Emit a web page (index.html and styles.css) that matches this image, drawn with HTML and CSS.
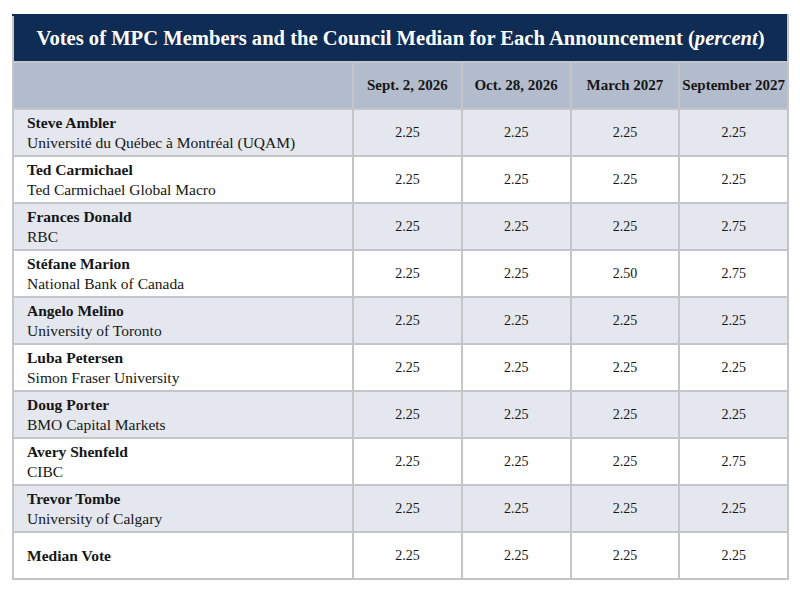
FILE: index.html
```html
<!DOCTYPE html>
<html lang="en">
<head>
<meta charset="utf-8">
<title>Votes of MPC Members</title>
<link rel="stylesheet" href="styles.css">
</head>
<body>
<div class="page">
  <table class="votes">
    <colgroup>
      <col class="c-name">
      <col class="c-val">
      <col class="c-val">
      <col class="c-val">
      <col class="c-val">
    </colgroup>
    <thead>
      <tr class="title-row">
        <th colspan="5" class="title">Votes of MPC Members and the Council Median for Each Announcement (<em>percent</em>)</th>
      </tr>
      <tr class="head-row">
        <th></th>
        <th>Sept. 2, 2026</th>
        <th>Oct. 28, 2026</th>
        <th>March 2027</th>
        <th>September 2027</th>
      </tr>
    </thead>
    <tbody>
      <tr class="alt"><td class="name"><b>Steve Ambler</b><br>Université du Québec à Montréal (UQAM)</td><td>2.25</td><td>2.25</td><td>2.25</td><td>2.25</td></tr>
      <tr><td class="name"><b>Ted Carmichael</b><br>Ted Carmichael Global Macro</td><td>2.25</td><td>2.25</td><td>2.25</td><td>2.25</td></tr>
      <tr class="alt"><td class="name"><b>Frances Donald</b><br>RBC</td><td>2.25</td><td>2.25</td><td>2.25</td><td>2.75</td></tr>
      <tr><td class="name"><b>Stéfane Marion</b><br>National Bank of Canada</td><td>2.25</td><td>2.25</td><td>2.50</td><td>2.75</td></tr>
      <tr class="alt"><td class="name"><b>Angelo Melino</b><br>University of Toronto</td><td>2.25</td><td>2.25</td><td>2.25</td><td>2.25</td></tr>
      <tr><td class="name"><b>Luba Petersen</b><br>Simon Fraser University</td><td>2.25</td><td>2.25</td><td>2.25</td><td>2.25</td></tr>
      <tr class="alt"><td class="name"><b>Doug Porter</b><br>BMO Capital Markets</td><td>2.25</td><td>2.25</td><td>2.25</td><td>2.25</td></tr>
      <tr><td class="name"><b>Avery Shenfeld</b><br>CIBC</td><td>2.25</td><td>2.25</td><td>2.25</td><td>2.75</td></tr>
      <tr class="alt"><td class="name"><b>Trevor Tombe</b><br>University of Calgary</td><td>2.25</td><td>2.25</td><td>2.25</td><td>2.25</td></tr>
      <tr><td class="name"><b>Median Vote</b></td><td>2.25</td><td>2.25</td><td>2.25</td><td>2.25</td></tr>
    </tbody>
  </table>
</div>
</body>
</html>
```
FILE: styles.css
```css
html, body {
  margin: 0;
  padding: 0;
  background: #ffffff;
}

.page {
  padding: 14px 13px 0 12px;
  font-family: "Liberation Serif", "DejaVu Serif", serif;
  color: #161616;
}

.votes {
  width: 775px;
  border-collapse: collapse;
  table-layout: fixed;
  font-size: 15.5px;
}

.c-name { width: 340px; }
.c-val { width: 108.75px; }

.votes th,
.votes td {
  border: 2px solid #c3c5c9;
  padding: 0;
  height: 45px;
  vertical-align: middle;
}

.title-row .title {
  background: #0e2c54;
  color: #ffffff;
  font-size: 20.6px;
  font-weight: bold;
  text-align: center;
  height: 45px;
  border-color: #0e2c54 #c3c5c9 #c3c5c9 #c3c5c9;
}

.title em {
  font-style: italic;
}

.head-row th {
  background: #b3bccc;
  font-weight: bold;
  font-size: 15px;
  text-align: center;
  height: 45px;
}

.votes td {
  text-align: center;
  font-size: 14px;
  line-height: 20px;
}

.votes td.name {
  text-align: left;
  padding-left: 13px;
  font-size: 15.5px;
}

.votes tr.alt td {
  background: #e4e7ee;
}
```
